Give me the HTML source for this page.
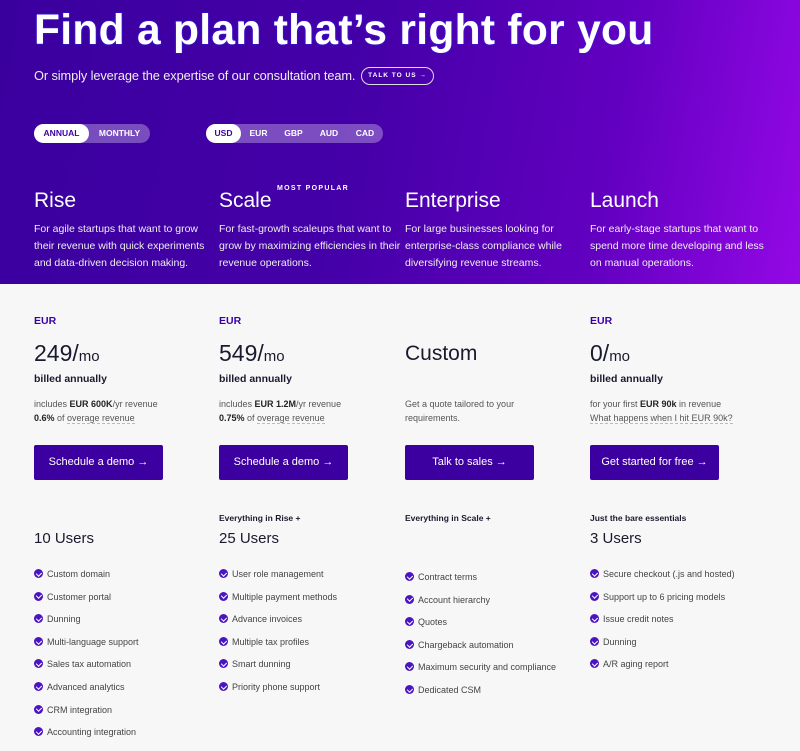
<!DOCTYPE html>
<html><head><meta charset="utf-8"><style>
*{margin:0;padding:0;box-sizing:border-box}
body{width:800px;height:751px;overflow:hidden;font-family:"Liberation Sans",sans-serif;background:#f7f7f8;position:relative;color:#1a1a2e}
.hero{position:absolute;left:0;top:0;width:800px;height:284px;background:linear-gradient(100deg,#3a009e 0%,#4500a8 45%,#6200c0 75%,#9408e6 100%)}
.abs{position:absolute}
h1{position:absolute;left:34px;top:7px;font-size:42.5px;font-weight:bold;color:#fff;letter-spacing:0.3px;white-space:nowrap;text-shadow:0 0 2px #2a2aff}
.sub{left:34px;top:68px;font-size:12.8px;letter-spacing:-0.1px;color:#eee;white-space:nowrap}
.talk{left:361px;top:67px;width:73px;height:18px;border:1.5px solid #ddd;border-radius:10px;color:#fff;font-size:6.5px;font-weight:bold;letter-spacing:1px;text-align:center;line-height:15px}
.pill{top:124px;height:19px;background:rgba(255,255,255,.3);border-radius:10px;display:flex}
.pill span{font-size:8.5px;font-weight:bold;color:#fff;line-height:19px;text-align:center;border-radius:10px}
.pill span.on{background:#fff;color:#3a00a0}
.pn{font-size:21px;color:#fff;top:189px}
.pd{font-size:10.5px;color:#eee;line-height:17px;top:221px;width:185px}
.eur{font-size:10.5px;color:#3a00a8;top:315px;font-weight:bold}
.price{font-size:23px;color:#1a1a2e;top:340px}
.price small{font-size:15px}
.bill{font-size:10.5px;font-weight:bold;top:373px}
.inc{font-size:9px;color:#555;line-height:14px;top:397px;width:180px}
.inc b{color:#222}
.inc u{text-decoration:none;border-bottom:1px dashed #bbb}
.btn{top:445px;width:129px;height:35px;background:#3d00a0;color:#fff;font-size:11px;text-align:center;line-height:35px;border-radius:2px}
.ev{font-size:8.5px;font-weight:bold;top:513px}
.users{font-size:15px;top:530px}
ul{position:absolute;list-style:none}
li{font-size:9px;color:#444;height:22.6px;line-height:10px;position:relative;padding-left:13px}
li:before{content:"";position:absolute;left:0;top:0;width:9px;height:9px;border-radius:50%;background:#4a14c0}
li:after{content:"";position:absolute;left:2.5px;top:1.8px;width:2.5px;height:4px;border:solid #fff;border-width:0 1.3px 1.3px 0;transform:rotate(45deg)}
</style></head><body>
<div class="hero"></div>
<h1>Find a plan that’s right for you</h1>
<div class="abs sub">Or simply leverage the expertise of our consultation team.</div>
<div class="abs talk">TALK TO US →</div>
<div class="abs pill" style="left:34px;width:116px"><span class="on" style="width:55px">ANNUAL</span><span style="width:61px">MONTHLY</span></div>
<div class="abs pill" style="left:206px;width:177px"><span class="on" style="width:35px">USD</span><span style="width:35px">EUR</span><span style="width:35px">GBP</span><span style="width:36px">AUD</span><span style="width:36px">CAD</span></div>

<div class="abs pn" style="left:34px">Rise</div>
<div class="abs pn" style="left:219px">Scale</div>
<div class="abs" style="left:277px;top:185px;font-size:7px;font-weight:bold;color:#fff;letter-spacing:1.3px">MOST POPULAR</div>
<div class="abs pn" style="left:405px">Enterprise</div>
<div class="abs pn" style="left:590px">Launch</div>
<div class="abs pd" style="left:34px">For agile startups that want to grow their revenue with quick experiments and data-driven decision making.</div>
<div class="abs pd" style="left:219px">For fast-growth scaleups that want to grow by maximizing efficiencies in their revenue operations.</div>
<div class="abs pd" style="left:405px">For large businesses looking for enterprise-class compliance while diversifying revenue streams.</div>
<div class="abs pd" style="left:590px">For early-stage startups that want to spend more time developing and less on manual operations.</div>

<div class="abs eur" style="left:34px">EUR</div>
<div class="abs eur" style="left:219px">EUR</div>
<div class="abs eur" style="left:590px">EUR</div>
<div class="abs price" style="left:34px">249/<small>mo</small></div>
<div class="abs price" style="left:219px">549/<small>mo</small></div>
<div class="abs price" style="left:405px;font-size:21px;top:342px">Custom</div>
<div class="abs price" style="left:590px">0/<small>mo</small></div>
<div class="abs bill" style="left:34px">billed annually</div>
<div class="abs bill" style="left:219px">billed annually</div>
<div class="abs bill" style="left:590px">billed annually</div>
<div class="abs inc" style="left:34px">includes <b>EUR 600K</b>/yr revenue<br><b>0.6%</b> of <u>overage revenue</u></div>
<div class="abs inc" style="left:219px">includes <b>EUR 1.2M</b>/yr revenue<br><b>0.75%</b> of <u>overage revenue</u></div>
<div class="abs inc" style="left:405px">Get a quote tailored to your<br>requirements.</div>
<div class="abs inc" style="left:590px">for your first <b>EUR 90k</b> in revenue<br><u>What happens when I hit EUR 90k?</u></div>
<div class="abs btn" style="left:34px">Schedule a demo →</div>
<div class="abs btn" style="left:219px">Schedule a demo →</div>
<div class="abs btn" style="left:405px">Talk to sales →</div>
<div class="abs btn" style="left:590px">Get started for free →</div>

<div class="abs ev" style="left:219px">Everything in Rise +</div>
<div class="abs ev" style="left:405px">Everything in Scale +</div>
<div class="abs ev" style="left:590px">Just the bare essentials</div>
<div class="abs users" style="left:34px">10 Users</div>
<div class="abs users" style="left:219px">25 Users</div>
<div class="abs users" style="left:590px">3 Users</div>

<ul style="left:34px;top:569px"><li>Custom domain</li><li>Customer portal</li><li>Dunning</li><li>Multi-language support</li><li>Sales tax automation</li><li>Advanced analytics</li><li>CRM integration</li><li>Accounting integration</li></ul>
<ul style="left:219px;top:569px"><li>User role management</li><li>Multiple payment methods</li><li>Advance invoices</li><li>Multiple tax profiles</li><li>Smart dunning</li><li>Priority phone support</li></ul>
<ul style="left:405px;top:572px"><li>Contract terms</li><li>Account hierarchy</li><li>Quotes</li><li>Chargeback automation</li><li>Maximum security and compliance</li><li>Dedicated CSM</li></ul>
<ul style="left:590px;top:569px"><li>Secure checkout (.js and hosted)</li><li>Support up to 6 pricing models</li><li>Issue credit notes</li><li>Dunning</li><li>A/R aging report</li></ul>
</body></html>
